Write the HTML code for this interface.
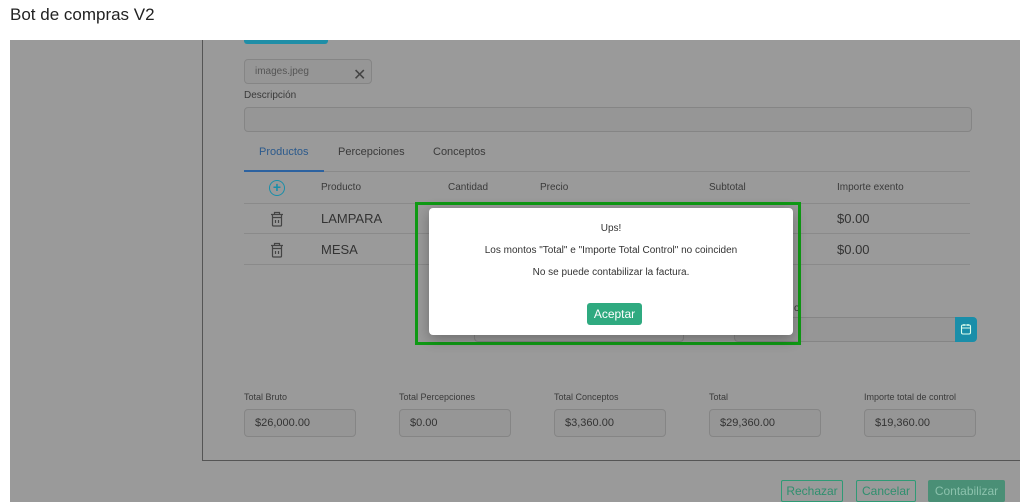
<!DOCTYPE html>
<html><head><style>
*{margin:0;padding:0;box-sizing:border-box}
body{width:1020px;height:502px;background:#fff;font-family:"Liberation Sans",sans-serif;position:relative;overflow:hidden;color:#333}
.a{position:absolute}
.ov{left:10px;top:40px;width:1010px;height:462px;background:#9a9a9a}
.t{font-size:10px;color:#3a3a3a}
.inp{border:1px solid #858585;border-radius:4px;background:#969696;font-size:11px;color:#333;padding-left:10px;line-height:26px;height:28px}
.hl{height:1px;background:#8a8a8a;left:244px;width:726px}
.btn{border:1px solid #2f9a75;border-radius:2px;color:#2f8f6e;font-size:12px;text-align:center;line-height:20px;height:22px}
</style></head><body>
<div class="a" style="left:10px;top:5px;font-size:17px;color:#222">Bot de compras V2</div>
<div class="a ov"></div>
<div class="a" style="left:202px;top:40px;width:1px;height:421px;background:#555"></div>
<div class="a" style="left:202px;top:460px;width:818px;height:1px;background:#555"></div>
<div class="a" style="left:244px;top:40px;width:84px;height:4px;background:#1f8ea7;border-radius:0 0 3px 3px"></div>
<div class="a inp" style="left:244px;top:59px;width:128px;height:25px;line-height:24px;font-size:10px;color:#555">images.jpeg<span style="position:absolute;left:108px;top:4px;font-size:16px;color:#444">✕</span></div>
<div class="a t" style="left:244px;top:90px">Descripción</div>
<div class="a inp" style="left:244px;top:107px;width:728px;height:25px"></div>
<div class="a" style="left:259px;top:146px;font-size:11px;color:#2c5a8c">Productos</div>
<div class="a" style="left:338px;top:146px;font-size:11px;color:#3a3a3a">Percepciones</div>
<div class="a" style="left:433px;top:146px;font-size:11px;color:#3a3a3a">Conceptos</div>
<div class="a hl" style="top:171px"></div>
<div class="a" style="left:244px;top:170px;width:80px;height:2px;background:#2c62a0"></div>
<div class="a" style="left:269px;top:180px;width:16px;height:16px;border:1.5px solid #1a8ea9;border-radius:50%;color:#1a8ea9;font-size:14px;line-height:12px;text-align:center;font-weight:bold">+</div>
<div class="a t" style="left:321px;top:182px">Producto</div>
<div class="a t" style="left:448px;top:182px">Cantidad</div>
<div class="a t" style="left:540px;top:182px">Precio</div>
<div class="a t" style="left:709px;top:182px">Subtotal</div>
<div class="a t" style="left:837px;top:182px">Importe exento</div>
<div class="a hl" style="top:203px"></div>
<div class="a hl" style="top:233px"></div>
<div class="a hl" style="top:264px"></div>
<svg class="a" style="left:270px;top:211px" width="14" height="16" viewBox="0 0 14 16" fill="none" stroke="#444" stroke-width="1.2"><path d="M1 3.5h12M4.5 3.5V1.5h5v2M2.5 3.5v10.5a1 1 0 0 0 1 1h7a1 1 0 0 0 1-1V3.5M2.5 6.5h9M5.5 9v3M8.5 9v3"/></svg>
<svg class="a" style="left:270px;top:242px" width="14" height="16" viewBox="0 0 14 16" fill="none" stroke="#444" stroke-width="1.2"><path d="M1 3.5h12M4.5 3.5V1.5h5v2M2.5 3.5v10.5a1 1 0 0 0 1 1h7a1 1 0 0 0 1-1V3.5M2.5 6.5h9M5.5 9v3M8.5 9v3"/></svg>
<div class="a" style="left:321px;top:211px;font-size:13px;color:#333">LAMPARA</div>
<div class="a" style="left:321px;top:242px;font-size:13px;color:#333">MESA</div>
<div class="a" style="left:837px;top:211px;font-size:13px;color:#333">$0.00</div>
<div class="a" style="left:837px;top:242px;font-size:13px;color:#333">$0.00</div>
<div class="a" style="left:794px;top:303px;font-size:10px;color:#333">o</div>
<div class="a inp" style="left:734px;top:317px;width:222px;height:25px;border-radius:4px 0 0 4px"></div>
<div class="a" style="left:955px;top:317px;width:22px;height:25px;background:#1a8ea9;border-radius:0 4px 4px 0"></div>
<svg class="a" style="left:960px;top:323px" width="12" height="12" viewBox="0 0 12 12" fill="none" stroke="#dfe" stroke-width="1.1"><rect x="1.5" y="2" width="9" height="9" rx="1.5"/><path d="M1.5 5h9M4 1v2M8 1v2"/></svg>
<div class="a" style="left:474px;top:320px;width:210px;height:22px;border:1px solid #858585;border-radius:4px"></div>
<div class="a t" style="left:244px;top:392px;font-size:9px">Total Bruto</div>
<div class="a t" style="left:399px;top:392px;font-size:9px">Total Percepciones</div>
<div class="a t" style="left:554px;top:392px;font-size:9px">Total Conceptos</div>
<div class="a t" style="left:709px;top:392px;font-size:9px">Total</div>
<div class="a t" style="left:864px;top:392px;font-size:9px">Importe total de control</div>
<div class="a inp" style="left:244px;top:409px;width:112px">$26,000.00</div>
<div class="a inp" style="left:399px;top:409px;width:112px">$0.00</div>
<div class="a inp" style="left:554px;top:409px;width:112px">$3,360.00</div>
<div class="a inp" style="left:709px;top:409px;width:112px">$29,360.00</div>
<div class="a inp" style="left:864px;top:409px;width:112px">$19,360.00</div>
<div class="a btn" style="left:781px;top:480px;width:62px">Rechazar</div>
<div class="a btn" style="left:856px;top:480px;width:60px">Cancelar</div>
<div class="a btn" style="left:928px;top:480px;width:77px;background:#4a8f76;color:#8cc2ad;border-color:#4a8f76">Contabilizar</div>
<div class="a" style="left:415px;top:202px;width:386px;height:143px;border:3px solid #0f9a14"></div>
<div class="a" style="left:429px;top:208px;width:364px;height:127px;background:#fff;border-radius:4px;box-shadow:0 4px 14px rgba(0,0,0,.3)"></div>
<div class="a" style="left:429px;top:223px;width:364px;text-align:center;font-size:10px;color:#333">Ups!</div>
<div class="a" style="left:429px;top:245px;width:364px;text-align:center;font-size:10px;color:#333">Los montos "Total" e "Importe Total Control" no coinciden</div>
<div class="a" style="left:429px;top:267px;width:364px;text-align:center;font-size:10px;color:#333">No se puede contabilizar la factura.</div>
<div class="a" style="left:587px;top:303px;width:55px;height:22px;background:#2faa80;border-radius:3px;color:#fff;font-size:12px;text-align:center;line-height:22px">Aceptar</div>
</body></html>
